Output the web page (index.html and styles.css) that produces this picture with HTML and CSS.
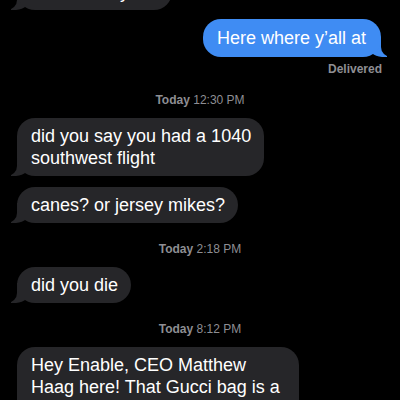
FILE: index.html
```html
<!DOCTYPE html>
<html>
<head>
  <title>Messages</title>
  <link rel="stylesheet" href="styles.css">
</head>
<body>
  <div class="thread">
    <div class="bubble in first">Where are you?</div>

    <div class="bubble out">Here where y’all at</div>
    <div class="status">Delivered</div>

    <div class="stamp"><b>Today</b> 12:30 PM</div>
    <div class="bubble in">did you say you had a 1040<br>southwest flight</div>
    <div class="bubble in gap">canes? or jersey mikes?</div>

    <div class="stamp wide"><b>Today</b> 2:18 PM</div>
    <div class="bubble in">did you die</div>

    <div class="stamp wide"><b>Today</b> 8:12 PM</div>
    <div class="bubble in">Hey Enable, CEO Matthew<br>Haag here! That Gucci bag is a<br>fake, but I’ve got something real</div>
  </div>
</body>
</html>
```

FILE: styles.css
```css
html {
  background: #000;
}

body {
  margin: 0;
  font-family: "Liberation Sans", Arial, sans-serif;
  color: #fff;
  overflow: hidden;
}

.thread {
  display: flex;
  flex-direction: column;
}

.bubble {
  position: relative;
  font-size: 18px;
  line-height: 22px;
  padding: 7px 13px 7px 14px;
  border-radius: 18px;
  white-space: nowrap;
  margin-top: 10px;
}

/* tail: a coloured corner with a black rounded cut-out beside it */
.bubble::before,
.bubble::after {
  content: "";
  position: absolute;
  bottom: 0;
  height: 20px;
  z-index: -1;
}

.in {
  align-self: flex-start;
  margin-left: 17px;
  background: #262629;
}

.in::before {
  left: -6px;
  width: 20px;
  background: #262629;
  border-bottom-right-radius: 15px;
}

.in::after {
  left: -26px;
  width: 26px;
  background: #000;
  border-bottom-right-radius: 10px;
}

.first {
  margin-top: -26px;
}

.gap {
  margin-top: 11px;
}

.out {
  align-self: flex-end;
  margin-right: 19px;
  margin-top: 9px;
  padding: 8px 15px 8px 14px;
  background: #3f8cf3;
}

.out::before {
  right: -6px;
  width: 20px;
  background: #3f8cf3;
  border-bottom-left-radius: 15px;
}

.out::after {
  right: -26px;
  width: 26px;
  background: #000;
  border-bottom-left-radius: 10px;
}

.status {
  align-self: flex-end;
  margin: 5px 18px 0 0;
  font-size: 12px;
  line-height: 15px;
  font-weight: bold;
  color: #8e8e93;
}

.stamp {
  align-self: center;
  margin-top: 16px;
  font-size: 12px;
  line-height: 15px;
  color: #8e8e93;
}

.stamp b {
  font-weight: bold;
}

.stamp.wide {
  margin-top: 19px;
}

.stamp + .bubble {
  margin-top: 10px;
}
```
